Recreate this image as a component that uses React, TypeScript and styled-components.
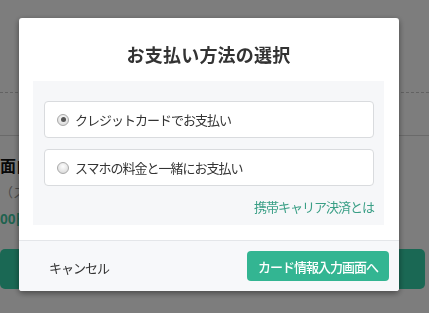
import React from "react";
import styled, { createGlobalStyle } from "styled-components";

const Global = createGlobalStyle`
  html, body { margin: 0; padding: 0; background: #fff; }
  body { font-family: "Noto Sans CJK JP", "Noto Sans", sans-serif; overflow: hidden; }
  * { box-sizing: border-box; }
`;

const Page = styled.div`
  width: 429px;
  height: 313px;
  display: flex;
  flex-direction: column;
`;

const TopArea = styled.div`
  height: 93px;
  border-bottom: 1px dashed #c8c8c8;
`;

const RuleArea = styled.div`
  height: 43px;
  border-bottom: 1px solid #d8d8d8;
`;

const Info = styled.div`
  width: 19px;
  overflow: hidden;
  display: flex;
  flex-direction: column;
  padding-top: 18px;
  color: #111;
`;

const InfoTitle = styled.div`
  font-size: 16px;
  font-weight: bold;
  line-height: 22px;
  white-space: nowrap;
`;

const InfoSub = styled.div`
  margin-top: 7px;
  font-size: 13px;
  line-height: 18px;
  color: #999;
  white-space: nowrap;
`;

const InfoPrice = styled.div`
  margin-top: 8px;
  font-size: 14px;
  font-weight: bold;
  line-height: 20px;
  color: #3fc9a2;
  white-space: nowrap;
  font-family: "Liberation Sans", sans-serif;
`;

const PageButton = styled.div`
  margin: 20px 4px 0 0;
  height: 40px;
  border-radius: 5px;
  background: #36d4ab;
`;

const Overlay = styled.div`
  position: fixed;
  inset: 0;
  background: rgba(0, 0, 0, 0.51);
  display: flex;
  justify-content: center;
  align-items: flex-start;
  padding-top: 18px;
`;

const Modal = styled.div`
  width: 380px;
  margin-left: -11px;
  background: #fff;
  border-radius: 3px;
  box-shadow: 0 2px 6px rgba(0, 0, 0, 0.45);
  overflow: hidden;
  display: flex;
  flex-direction: column;
`;

const Body = styled.div`
  padding: 0 15px 15px 14px;
  border-bottom: 1px solid #e4e6e9;
`;

const Title = styled.h2`
  margin: 0;
  height: 63px;
  padding-top: 9px;
  display: flex;
  align-items: center;
  justify-content: center;
  font-size: 18px;
  font-weight: bold;
  color: #333;
  letter-spacing: 0.2px;
`;

const Panel = styled.div`
  background: #f6f7f9;
  padding: 20px 10px 10px 11px;
  display: flex;
  flex-direction: column;
`;

const Options = styled.div`
  display: flex;
  flex-direction: column;
  gap: 11px;
`;

const Option = styled.label`
  height: 37px;
  background: #fff;
  border: 1px solid #d9dbde;
  border-radius: 4px;
  display: flex;
  align-items: center;
  padding-left: 12px;
  gap: 6px;
  font-size: 13px;
  letter-spacing: -1px;
  color: #333;
  cursor: pointer;
`;

const Radio = styled.span<{ $checked?: boolean }>`
  width: 12px;
  height: 12px;
  border-radius: 50%;
  border: 1px solid #a9a9a9;
  background: radial-gradient(circle at 50% 35%, #fdfdfd 0%, #e4e4e4 60%, #cfcfcf 100%);
  display: flex;
  align-items: center;
  justify-content: center;
  flex: none;
  &::after {
    content: "";
    width: 5px;
    height: 5px;
    border-radius: 50%;
    background: #555;
    display: ${(p) => (p.$checked ? "block" : "none")};
  }
`;

const LinkRow = styled.div`
  margin-top: 13px;
  display: flex;
  justify-content: flex-end;
`;

const HelpLink = styled.a`
  font-size: 13px;
  line-height: 16px;
  letter-spacing: -1px;
  color: #3a9f86;
  text-decoration: none;
`;

const Footer = styled.div`
  background: #f7f8fa;
  height: 50px;
  padding: 0 10px 0 30px;
  display: flex;
  align-items: center;
  justify-content: space-between;
`;

const Cancel = styled.button`
  border: none;
  background: none;
  padding: 0;
  margin-top: 2px;
  font-family: inherit;
  font-size: 13px;
  letter-spacing: -1px;
  color: #333;
  cursor: pointer;
`;

const Primary = styled.button`
  height: 30px;
  width: 142px;
  border: none;
  border-radius: 4px;
  background: #33b592;
  color: #fff;
  font-family: inherit;
  font-size: 13px;
  letter-spacing: -1px;
  font-weight: 500;
  cursor: pointer;
`;

export default function App() {
  return (
    <>
      <Global />
      <Page>
        <TopArea />
        <RuleArea />
        <Info>
          <InfoTitle>面白い漫画</InfoTitle>
          <InfoSub>（スマホ）</InfoSub>
          <InfoPrice>00円</InfoPrice>
        </Info>
        <PageButton />
      </Page>
      <Overlay>
        <Modal>
          <Body>
            <Title>お支払い方法の選択</Title>
            <Panel>
              <Options>
                <Option>
                  <Radio $checked />
                  クレジットカードでお支払い
                </Option>
                <Option>
                  <Radio />
                  スマホの料金と一緒にお支払い
                </Option>
              </Options>
              <LinkRow>
                <HelpLink href="#">携帯キャリア決済とは</HelpLink>
              </LinkRow>
            </Panel>
          </Body>
          <Footer>
            <Cancel>キャンセル</Cancel>
            <Primary>カード情報入力画面へ</Primary>
          </Footer>
        </Modal>
      </Overlay>
    </>
  );
}
